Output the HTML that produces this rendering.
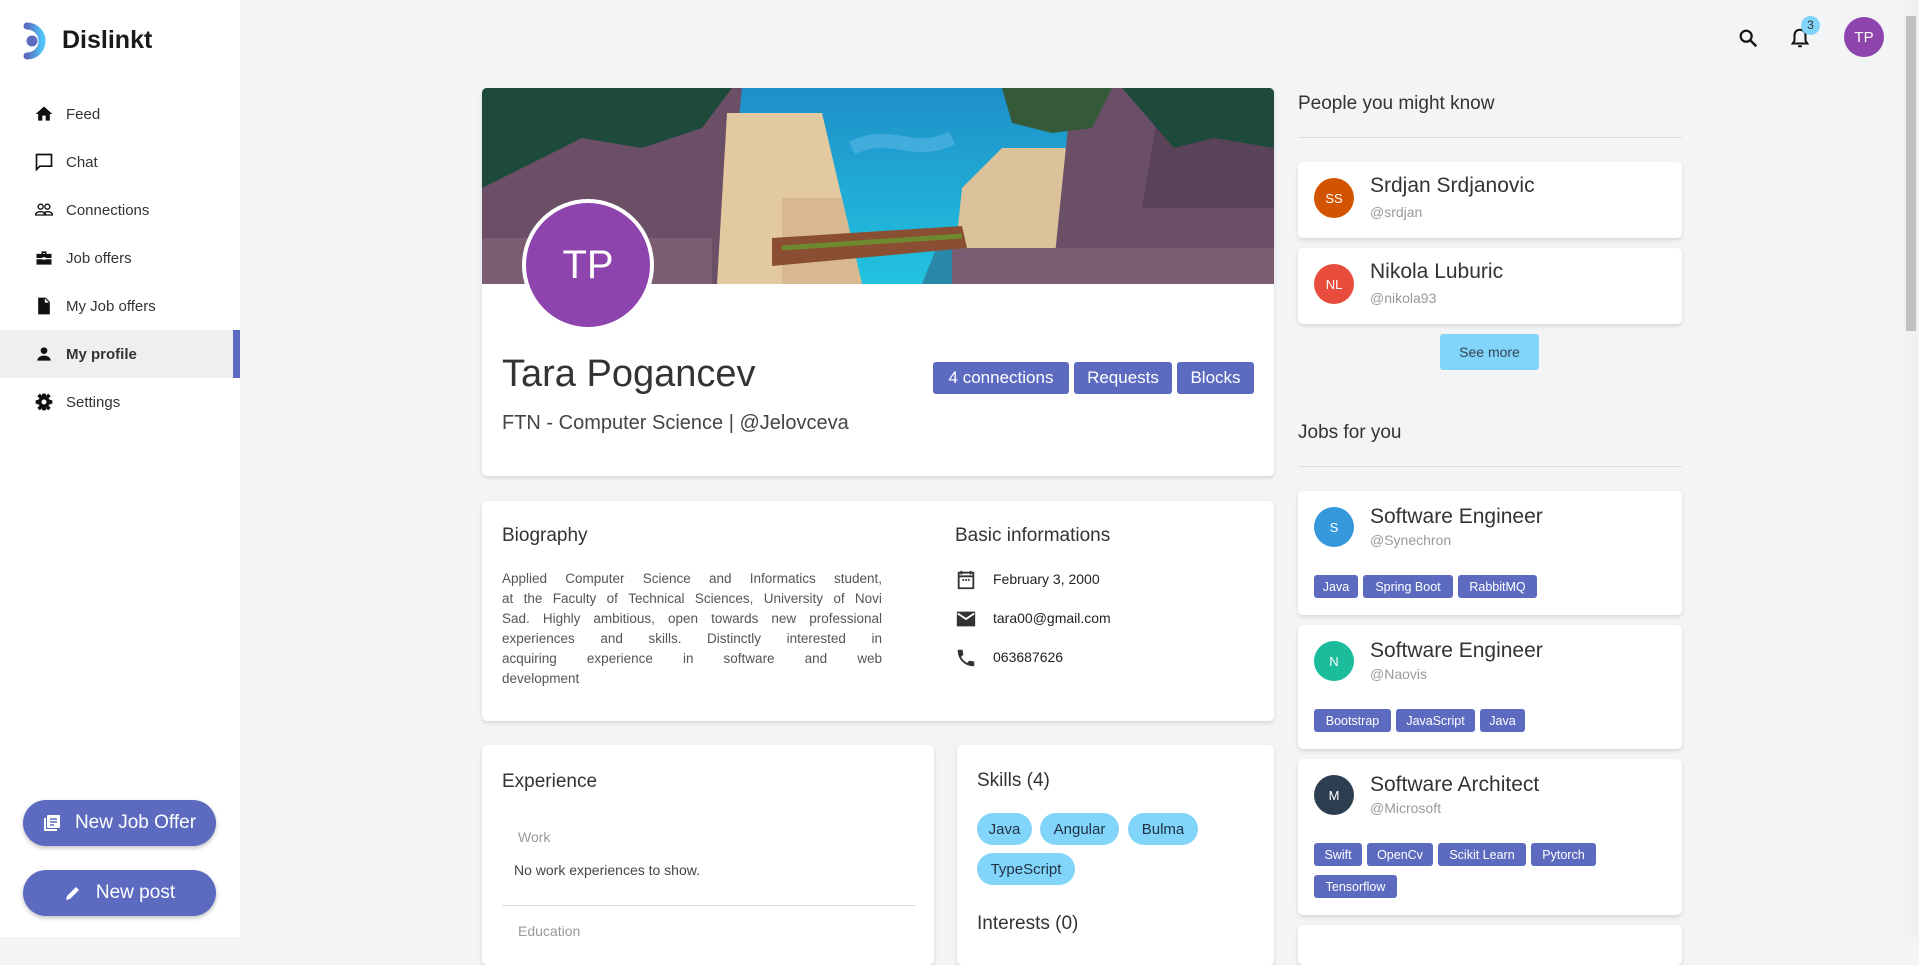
<!DOCTYPE html>
<html><head><meta charset="utf-8"><style>
*{box-sizing:border-box;margin:0;padding:0}
body{width:1919px;height:937px;overflow:hidden;background:#f3f4f6;font-family:"Liberation Sans",sans-serif;color:#222;position:relative}
.abs{position:absolute}
.side{position:absolute;left:0;top:0;width:240px;height:937px;background:#fff}
.nav{position:absolute;left:0;width:240px;height:48px;display:flex;align-items:center;font-size:15px;color:#333}
.nav svg{position:absolute;left:34px;width:20px;height:20px}
.nav span{position:absolute;left:66px}
.card{position:absolute;background:#fff;border-radius:5px;box-shadow:0 2px 4px rgba(0,0,0,.12)}
.btn{position:absolute;background:#5c6bc0;color:#fff;border-radius:3px;font-size:17px;display:flex;align-items:center;justify-content:center;top:362px;height:32px}
.big{position:absolute;left:23px;width:193px;height:46px;border-radius:23px;background:#5c6bc0;color:#fff;font-size:19px;display:flex;align-items:center;justify-content:center;box-shadow:0 2px 4px rgba(0,0,0,.25)}
.chip{position:absolute;height:32px;border-radius:16px;background:#81d4fa;color:#234;font-size:15px;display:flex;align-items:center;justify-content:center}
.tag{position:absolute;height:23px;border-radius:3px;background:#5c6bc0;color:#fff;font-size:12.5px;display:flex;align-items:center;justify-content:center}
.av{position:absolute;width:40px;height:40px;border-radius:50%;color:#fff;font-size:13px;display:flex;align-items:center;justify-content:center}
.t1{position:absolute;left:72px;font-size:21px;color:#333}
.t2{position:absolute;left:72px;font-size:14px;color:#999}
.h{position:absolute;font-size:19px;color:#333}
.bl{height:20px;text-align:justify;text-align-last:justify;white-space:nowrap;display:flex;justify-content:space-between}
</style></head><body>
<div class="side">
 <svg class="abs" style="left:22px;top:21px" width="30" height="40" viewBox="0 0 30 40"><defs><linearGradient id="lg" x1="0" x2="1"><stop offset="0" stop-color="#5c6bc0"/><stop offset="1" stop-color="#4fc3f7"/></linearGradient></defs><path d="M5 5 A15 15 0 1 1 5 35" fill="none" stroke="url(#lg)" stroke-width="7" stroke-linecap="round"/><circle cx="10" cy="20" r="5.5" fill="#5c6bc0"/></svg>
 <div class="abs" style="left:62px;top:26px;font-size:25px;font-weight:bold;color:#1a1a1a">Dislinkt</div>
 <div class="nav" style="top:90px"><svg viewBox="0 0 24 24"><path d="M10 20v-6h4v6h5v-8h3L12 3 2 12h3v8z" fill="#111"/></svg><span>Feed</span></div>
 <div class="nav" style="top:138px"><svg viewBox="0 0 24 24"><path d="M3 3h18v14H7l-4 4z" fill="none" stroke="#111" stroke-width="2"/></svg><span>Chat</span></div>
 <div class="nav" style="top:186px"><svg viewBox="0 0 24 24"><circle cx="8" cy="8" r="3" fill="none" stroke="#111" stroke-width="1.6"/><circle cx="16" cy="8" r="3" fill="none" stroke="#111" stroke-width="1.6"/><path d="M2 18c0-3 3-4 6-4s6 1 6 4zM12 18c0-3 2-4 4-4 3 0 6 1 6 4z" fill="none" stroke="#111" stroke-width="1.6"/></svg><span>Connections</span></div>
 <div class="nav" style="top:234px"><svg viewBox="0 0 24 24"><path d="M9 4h6v3h6v13H3V7h6zM11 6v1h2V6z" fill="#111"/><rect x="3" y="12" width="18" height="1.5" fill="#fff"/><rect x="10" y="11" width="4" height="3" fill="#fff"/></svg><span>Job offers</span></div>
 <div class="nav" style="top:282px"><svg viewBox="0 0 24 24"><path d="M5 2h9l5 5v15H5zM13 3v5h5z" fill="#111"/></svg><span>My Job offers</span></div>
 <div class="nav" style="top:330px;background:#efefef;font-weight:bold"><svg viewBox="0 0 24 24"><circle cx="12" cy="8" r="4" fill="#111"/><path d="M4 20c0-4 4-6 8-6s8 2 8 6z" fill="#111"/></svg><span>My profile</span><div class="abs" style="right:0;top:0;width:7px;height:48px;background:#5c6bc0"></div></div>
 <div class="nav" style="top:378px"><svg viewBox="0 0 24 24"><circle cx="12" cy="12" r="7" fill="#111"/><path d="M10 2h4l1 4-6 0zM10 22h4l1-4h-6zM2 10v4l4 1V9zM22 10v4l-4 1V9zM4 5l3-3 3 3-3 3zM20 5l-3-3-3 3 3 3zM4 19l3 3 3-3-3-3zM20 19l-3 3-3-3 3-3z" fill="#111"/><circle cx="12" cy="12" r="3" fill="#fff"/></svg><span>Settings</span></div>
 <div class="big" style="top:800px"><svg width="18" height="18" viewBox="0 0 18 18" style="margin-right:14px"><rect x="4" y="1" width="13" height="13" rx="1" fill="#fff"/><rect x="1" y="4" width="2" height="13" fill="#fff"/><rect x="1" y="15" width="13" height="2" fill="#fff"/><path d="M7 5h7M7 8h7M7 11h4" stroke="#5c6bc0" stroke-width="1.5"/></svg>New Job Offer</div>
 <div class="big" style="top:870px"><svg width="18" height="18" viewBox="0 0 18 18" style="margin-right:14px"><path d="M2 16l1-4 9-9 3 3-9 9z" fill="#fff"/></svg>New post</div>
</div>

<svg class="abs" style="left:1737px;top:27px" width="22" height="22" viewBox="0 0 24 24"><circle cx="10" cy="10" r="6" fill="none" stroke="#111" stroke-width="2.4"/><path d="M14.5 14.5L21 21" stroke="#111" stroke-width="2.6"/></svg>
<svg class="abs" style="left:1789px;top:26px" width="22" height="24" viewBox="0 0 24 24"><path d="M12 3c-4 0-6 3-6 6v6l-2 3h16l-2-3V9c0-3-2-6-6-6z" fill="none" stroke="#111" stroke-width="2.2"/><path d="M10 21h4" stroke="#111" stroke-width="2.2"/></svg>
<div class="abs" style="left:1801px;top:16px;width:19px;height:19px;border-radius:50%;background:#81d4fa;font-size:12px;color:#333;text-align:center;line-height:19px">3</div>
<div class="av" style="left:1844px;top:17px;background:#8e44ad;font-size:15px">TP</div>
<div class="abs" style="left:1903px;top:0;width:16px;height:937px;background:#f1f1f1"></div>
<div class="abs" style="left:1906px;top:16px;width:10px;height:315px;background:#c1c1c1"></div>

<div class="card" style="left:482px;top:88px;width:792px;height:388px;overflow:hidden">
 <svg class="abs" style="left:0;top:0" width="792" height="196" viewBox="0 0 792 196">
  <defs><linearGradient id="sky" x1="0" y1="0" x2="0" y2="1"><stop offset="0" stop-color="#1e8fc8"/><stop offset="1" stop-color="#22c3e0"/></linearGradient></defs>
  <rect width="792" height="196" fill="url(#sky)"/>
  <path d="M370 60c40-20 60 10 100-10" stroke="#58b8e6" stroke-width="14" fill="none" opacity=".6"/>
  <path d="M440 196l20-50 15 10 10-40 15 80z" fill="#2a88a8"/>
  <path d="M0 0h260l-20 196H0z" fill="#6b4f66"/>
  <path d="M245 25h95l40 171H235z" fill="#e3c9a0"/>
  <path d="M300 110h60l20 86h-80z" fill="#d8b88f"/>
  <path d="M480 100l40-40h70v136H470z" fill="#dcc29a"/>
  <path d="M590 0h202v196H570z" fill="#6b4f66"/>
  <path d="M680 0h112v120H660z" fill="#5a4258"/>
  <path d="M0 0h250l-30 40-60 20-60-10-60 30-40 20z" fill="#1e4a3c"/>
  <path d="M520 0h110l-20 40-40 5-40-10z" fill="#345a3a"/>
  <path d="M640 0h152v60l-60-10-40 10z" fill="#1e4a3c"/>
  <path d="M0 150h230v46H0zM470 160h322v36H470z" fill="#7a5d70"/>
  <path d="M290 150l190-12 5 22-195 18z" fill="#8a4e32"/>
  <path d="M300 160l180-12" stroke="#6e8a30" stroke-width="5"/>
 </svg>
 <div class="abs" style="left:40px;top:111px;width:132px;height:132px;border-radius:50%;background:#8e44ad;border:4px solid #fff;color:#fff;font-size:40px;display:flex;align-items:center;justify-content:center">TP</div>
 <div class="abs" style="left:20px;top:265px;font-size:38px;color:#333">Tara Pogancev</div>
 <div class="abs" style="left:20px;top:324px;font-size:20px;color:#444">FTN - Computer Science | @Jelovceva</div>
</div>
<div class="btn" style="left:933px;width:136px">4 connections</div>
<div class="btn" style="left:1074px;width:98px">Requests</div>
<div class="btn" style="left:1177px;width:77px">Blocks</div>

<div class="card" style="left:482px;top:501px;width:792px;height:220px">
 <div class="h" style="left:20px;top:24px">Biography</div>
 <div class="abs" style="left:20px;top:68px;width:380px;font-size:13.5px;line-height:20px;color:#555">
  <div class="bl"><span>Applied</span><span>Computer</span><span>Science</span><span>and</span><span>Informatics</span><span>student,</span></div>
  <div class="bl"><span>at</span><span>the</span><span>Faculty</span><span>of</span><span>Technical</span><span>Sciences,</span><span>University</span><span>of</span><span>Novi</span></div>
  <div class="bl"><span>Sad.</span><span>Highly</span><span>ambitious,</span><span>open</span><span>towards</span><span>new</span><span>professional</span></div>
  <div class="bl"><span>experiences</span><span>and</span><span>skills.</span><span>Distinctly</span><span>interested</span><span>in</span></div>
  <div class="bl"><span>acquiring</span><span>experience</span><span>in</span><span>software</span><span>and</span><span>web</span></div>
  <div style="height:20px">development</div>
 </div>
 <div class="h" style="left:473px;top:24px">Basic informations</div>
 <svg class="abs" style="left:473px;top:68px" width="22" height="22" viewBox="0 0 24 24"><path d="M4 4h16v17H4zM7 2v4M17 2v4M4 8h16" fill="none" stroke="#333" stroke-width="2"/><path d="M8 12h2M11 12h2M14 12h2" stroke="#333" stroke-width="2"/></svg>
 <div class="abs" style="left:511px;top:70px;font-size:14px;color:#222">February 3, 2000</div>
 <svg class="abs" style="left:473px;top:107px" width="22" height="22" viewBox="0 0 24 24"><path d="M2 4h20v16H2z" fill="#333"/><path d="M3 6l9 6 9-6" fill="none" stroke="#fff" stroke-width="2"/></svg>
 <div class="abs" style="left:511px;top:109px;font-size:14px;color:#222">tara00@gmail.com</div>
 <svg class="abs" style="left:473px;top:146px" width="22" height="22" viewBox="0 0 24 24"><path d="M6.6 10.8c1.4 2.8 3.8 5.1 6.6 6.6l2.2-2.2c.3-.3.7-.4 1-.2 1.1.4 2.300.6 3.6.6.6 0 1 .4 1 1V20c0 .6-.4 1-1 1C10.6 21 3 13.4 3 4c0-.6.4-1 1-1h3.5c.6 0 1 .4 1 1 0 1.3.2 2.5.6 3.6.1.3 0 .7-.2 1z" fill="#333"/></svg>
 <div class="abs" style="left:511px;top:148px;font-size:14px;color:#222">063687626</div>
</div>

<div class="card" style="left:482px;top:745px;width:452px;height:220px">
 <div class="h" style="left:20px;top:26px">Experience</div>
 <div class="abs" style="left:36px;top:84px;font-size:14px;color:#999">Work</div>
 <div class="abs" style="left:32px;top:117px;font-size:14px;color:#444">No work experiences to show.</div>
 <div class="abs" style="left:20px;top:160px;width:414px;height:1px;background:#ddd"></div>
 <div class="abs" style="left:36px;top:178px;font-size:14px;color:#999">Education</div>
</div>
<div class="card" style="left:957px;top:745px;width:317px;height:220px">
 <div class="h" style="left:20px;top:25px">Skills (4)</div>
 <div class="h" style="left:20px;top:168px">Interests (0)</div>
</div>
<div class="chip" style="left:977px;top:813px;width:55px">Java</div>
<div class="chip" style="left:1040px;top:813px;width:79px">Angular</div>
<div class="chip" style="left:1128px;top:813px;width:70px">Bulma</div>
<div class="chip" style="left:977px;top:853px;width:98px">TypeScript</div>

<div class="h" style="left:1298px;top:93px">People you might know</div>
<div class="abs" style="left:1298px;top:137px;width:384px;height:1px;background:#ddd"></div>
<div class="card" style="left:1298px;top:162px;width:384px;height:76px">
 <div class="av" style="left:16px;top:16px;background:#d35400">SS</div>
 <div class="t1" style="top:12px">Srdjan Srdjanovic</div><div class="t2" style="top:42px">@srdjan</div>
</div>
<div class="card" style="left:1298px;top:248px;width:384px;height:76px">
 <div class="av" style="left:16px;top:16px;background:#e74c3c">NL</div>
 <div class="t1" style="top:12px">Nikola Luburic</div><div class="t2" style="top:42px">@nikola93</div>
</div>
<div class="abs" style="left:1440px;top:334px;width:99px;height:36px;background:#81d4fa;border-radius:3px;font-size:14px;color:#345;display:flex;align-items:center;justify-content:center">See more</div>
<div class="h" style="left:1298px;top:422px">Jobs for you</div>
<div class="abs" style="left:1298px;top:466px;width:384px;height:1px;background:#ddd"></div>

<div class="card" style="left:1298px;top:491px;width:384px;height:124px">
 <div class="av" style="left:16px;top:16px;background:#3498db">S</div>
 <div class="t1" style="top:14px">Software Engineer</div><div class="t2" style="top:41px">@Synechron</div>
 <div class="tag" style="left:16px;top:84px;width:44px">Java</div>
 <div class="tag" style="left:65px;top:84px;width:90px">Spring Boot</div>
 <div class="tag" style="left:160px;top:84px;width:79px">RabbitMQ</div>
</div>
<div class="card" style="left:1298px;top:625px;width:384px;height:124px">
 <div class="av" style="left:16px;top:16px;background:#1abc9c">N</div>
 <div class="t1" style="top:14px">Software Engineer</div><div class="t2" style="top:41px">@Naovis</div>
 <div class="tag" style="left:16px;top:84px;width:77px">Bootstrap</div>
 <div class="tag" style="left:98px;top:84px;width:79px">JavaScript</div>
 <div class="tag" style="left:182px;top:84px;width:45px">Java</div>
</div>
<div class="card" style="left:1298px;top:759px;width:384px;height:156px">
 <div class="av" style="left:16px;top:16px;background:#2c3e50">M</div>
 <div class="t1" style="top:14px">Software Architect</div><div class="t2" style="top:41px">@Microsoft</div>
 <div class="tag" style="left:16px;top:84px;width:48px">Swift</div>
 <div class="tag" style="left:69px;top:84px;width:66px">OpenCv</div>
 <div class="tag" style="left:140px;top:84px;width:88px">Scikit Learn</div>
 <div class="tag" style="left:233px;top:84px;width:65px">Pytorch</div>
 <div class="tag" style="left:16px;top:116px;width:83px">Tensorflow</div>
</div>
<div class="card" style="left:1298px;top:925px;width:384px;height:40px"></div>
</body></html>
